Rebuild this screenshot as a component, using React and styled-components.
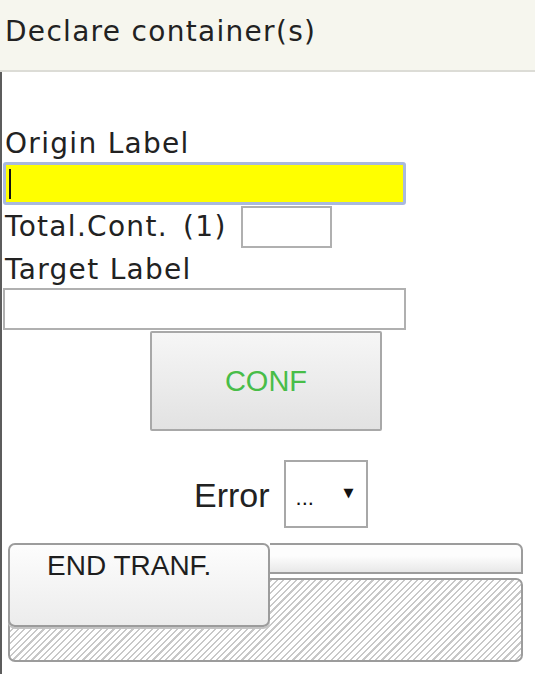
import React from "react";
import styled, { createGlobalStyle } from "styled-components";

const GlobalStyle = createGlobalStyle`
  body {
    margin: 0;
    background: #fff;
    font-family: "DejaVu Sans", Verdana, sans-serif;
    color: #222;
  }
`;

const Header = styled.div`
  height: 53px;
  padding: 17px 0 0 5px;
  background: #f6f6ee;
  border-bottom: 2px solid #dcdcd6;
  font-size: 28px;
  line-height: 30px;
  letter-spacing: 1.3px;
  color: #222;
`;

const Body = styled.div`
  min-height: calc(100vh - 72px);
  box-sizing: border-box;
  border-left: 2px solid #5c5c5c;
  padding: 57px 0 0 1px;
`;

const Label = styled.div`
  padding-left: 2px;
  margin-top: ${(p) => p.$top || 0}px;
  font-size: 28px;
  line-height: 30px;
  letter-spacing: 1.3px;
  word-spacing: ${(p) => p.$words || 0}px;
  color: #222;
`;

const FieldWrap = styled.div`
  position: relative;
  width: 403px;
  margin-top: ${(p) => p.$top || 0}px;
`;

const Field = styled.input`
  display: block;
  box-sizing: border-box;
  width: 100%;
  height: ${(p) => p.$h || 42}px;
  margin: 0;
  padding: 0 6px;
  font-size: 20px;
  background: ${(p) => (p.$active ? "#ffff00" : "#fff")};
  border: ${(p) => (p.$active ? "3px solid #a9b9de" : "2px solid #b0b0b0")};
  border-radius: ${(p) => (p.$active ? "3px" : "0")};
  outline: none;
`;

const Caret = styled.span`
  position: absolute;
  left: 6px;
  top: 7px;
  width: 2px;
  height: 30px;
  background: #111;
`;

const CountRow = styled.div`
  display: flex;
  align-items: center;
  gap: 14px;
  height: 42px;
  margin-top: 1px;
`;

const SmallBox = styled.input`
  box-sizing: border-box;
  width: 91px;
  height: 42px;
  margin: 0;
  border: 2px solid #b0b0b0;
  background: #fff;
  outline: none;
`;

const ConfButton = styled.button`
  display: block;
  box-sizing: border-box;
  width: 232px;
  height: 100px;
  margin: 1px 0 0 147px;
  border: 2px solid #a8a8a8;
  border-radius: 2px;
  background: linear-gradient(#f6f6f6, #e2e2e2);
  font-family: "Liberation Sans", Arial, sans-serif;
  font-size: 29px;
  color: #48bd48;
  padding: 0;
`;

const ErrorRow = styled.div`
  display: flex;
  align-items: center;
  gap: 14px;
  padding-left: 191px;
  margin-top: 29px;
`;

const ErrorText = styled.span`
  font-family: "Liberation Sans", Arial, sans-serif;
  font-size: 34px;
  color: #222;
  padding-top: 2px;
`;

const SelectBox = styled.div`
  box-sizing: border-box;
  width: 84px;
  height: 68px;
  border: 2px solid #a8a8a8;
  background: #fff;
  display: flex;
  align-items: center;
  justify-content: space-between;
  padding: 0 12px 0 10px;
  font-family: "Liberation Sans", Arial, sans-serif;
  color: #111;
`;

const Dots = styled.span`
  font-size: 22px;
  padding-top: 8px;
`;

const Arrow = styled.span`
  font-family: "DejaVu Sans", sans-serif;
  font-size: 13px;
  margin-top: -4px;
`;

const Panel = styled.div`
  display: grid;
  grid-template-columns: 262px 1fr;
  grid-template-rows: 31px 53px 35px;
  width: 515px;
  margin: 15px 0 0 5px;
`;

const EndButton = styled.button`
  grid-row: 1 / 3;
  grid-column: 1;
  z-index: 1;
  box-sizing: border-box;
  margin: 0;
  padding: 5px 0 0 37px;
  text-align: left;
  display: flex;
  align-items: flex-start;
  border: 2px solid #9c9c9c;
  border-radius: 7px;
  background: linear-gradient(#fdfdfd, #ececec);
  box-shadow: 0 2px 0 #c4c4c4;
  font-family: "Liberation Sans", Arial, sans-serif;
  font-size: 28px;
  color: #1e1e1e;
`;

const TopStrip = styled.div`
  grid-row: 1;
  grid-column: 2;
  box-sizing: border-box;
  border: 2px solid #9c9c9c;
  border-left: none;
  border-radius: 0 7px 0 0;
  background: linear-gradient(#fdfdfd 40%, #e8e8e8);
`;

const Hatch = styled.div`
  grid-row: 2 / 4;
  grid-column: 1 / 3;
  box-sizing: border-box;
  margin-top: 4px;
  border: 2px solid #9c9c9c;
  border-radius: 7px;
  background: repeating-linear-gradient(
    -45deg,
    #ffffff 0px,
    #ffffff 3px,
    #c8c8c8 3px,
    #c8c8c8 4.5px
  );
`;

export default function App() {
  return (
    <>
      <GlobalStyle />
      <Header>Declare container(s)</Header>
      <Body>
        <Label>Origin Label</Label>
        <FieldWrap $top={3}>
          <Field $active $h={43} readOnly />
          <Caret />
        </FieldWrap>
        <CountRow>
          <Label $words={5}>Total.Cont. (1)</Label>
          <SmallBox readOnly />
        </CountRow>
        <Label $top={7}>Target Label</Label>
        <FieldWrap $top={3}>
          <Field readOnly />
        </FieldWrap>
        <ConfButton>CONF</ConfButton>
        <ErrorRow>
          <ErrorText>Error</ErrorText>
          <SelectBox>
            <Dots>...</Dots>
            <Arrow>▼</Arrow>
          </SelectBox>
        </ErrorRow>
        <Panel>
          <EndButton>END TRANF.</EndButton>
          <TopStrip />
          <Hatch />
        </Panel>
      </Body>
    </>
  );
}
